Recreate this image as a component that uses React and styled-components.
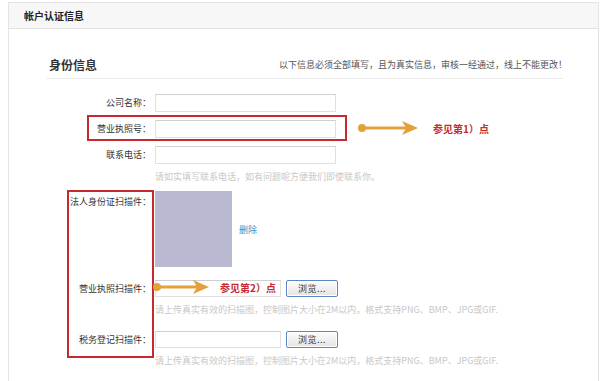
import React from "react";
import styled, { createGlobalStyle } from "styled-components";

const Global = createGlobalStyle`
  html, body { margin: 0; padding: 0; background: #fff; }
  body { font-family: "Noto Sans CJK SC", "Liberation Sans", sans-serif; color: #333; }
  #root { width: 600px; height: 381px; overflow: hidden; }
`;

const Page = styled.div`
  position: relative;
  width: 600px;
  height: 381px;
  padding: 2px 0 0 8px;
  box-sizing: border-box;
  overflow: hidden;
`;

const Panel = styled.div`
  width: 591px;
  height: 420px;
  border: 1px solid #e4e4e4;
  box-sizing: border-box;
  background: #fff;
`;

const Header = styled.div`
  height: 25px;
  line-height: 25px;
  background: #f7f7f7;
  border-bottom: 1px solid #e2e2e2;
  padding-left: 15px;
  font-size: 10px;
  font-weight: bold;
  color: #222;
`;

const Body = styled.div`
  padding: 28px 35px 0 37px;
`;

const SectionHead = styled.div`
  display: flex;
  justify-content: space-between;
  align-items: flex-start;
  height: 21px;
  border-bottom: 1px solid #ececec;
  padding-left: 3px;
`;

const SectionTitle = styled.div`
  font-size: 12px;
  line-height: 16px;
  font-weight: bold;
  color: #333;
`;

const Notice = styled.div`
  font-size: 9px;
  line-height: 16px;
  color: #555;
  margin-right: -4px;
`;

const Form = styled.div`
  padding-top: 15px;
  display: flex;
  flex-direction: column;
`;

const Row = styled.div`
  display: flex;
  align-items: ${(p) => (p.$top ? "flex-start" : "center")};
  gap: 4px;
  margin-top: ${(p) => p.$mt || 0}px;
`;

const Label = styled.div`
  width: 105px;
  flex: none;
  text-align: right;
  font-size: 9px;
  line-height: 12px;
  color: #333;
  padding-top: ${(p) => (p.$top ? 5 : 0)}px;
`;

const TextInput = styled.div`
  width: ${(p) => p.$w || 181}px;
  height: ${(p) => p.$h || 18}px;
  box-sizing: border-box;
  border: 1px solid #e0e0e0;
  border-top-color: #cfcfcf;
  background: #fff;
`;

const Hint = styled.div`
  margin: 7px 0 0 109px;
  font-size: 9px;
  line-height: 12px;
  color: #c8c8c8;
  white-space: nowrap;
`;

const ScanBox = styled.div`
  width: 77px;
  height: 76px;
  background: #b9b9d1;
`;

const DeleteLink = styled.a`
  align-self: center;
  margin-left: 3px;
  font-size: 9px;
  color: #3d8fc4;
  text-decoration: none;
`;

const BrowseButton = styled.button`
  margin-left: 1px;
  width: 52px;
  height: 17px;
  padding: 0;
  box-sizing: border-box;
  border: 1px solid #5d86c5;
  border-radius: 2px;
  background: linear-gradient(#fdfdfd, #e4e4e4);
  box-shadow: inset 0 0 0 1px #fff;
  font-family: inherit;
  font-size: 9px;
  line-height: 14px;
  letter-spacing: 0.5px;
  color: #333;
`;

const RedBox = styled.div`
  position: absolute;
  left: ${(p) => p.$x}px;
  top: ${(p) => p.$y}px;
  width: ${(p) => p.$w}px;
  height: ${(p) => p.$h}px;
  border: 2px solid #c52a2e;
  box-sizing: border-box;
  pointer-events: none;
`;

const Callout = styled.div`
  position: absolute;
  left: ${(p) => p.$x}px;
  top: ${(p) => p.$y}px;
  display: flex;
  align-items: center;
  gap: ${(p) => p.$gap}px;
  height: 14px;
`;

const CalloutText = styled.span`
  font-size: 10px;
  font-weight: bold;
  color: #c52a2e;
  white-space: nowrap;
`;

const Arrow = ({ width }) => (
  <svg width={width} height="14" viewBox={`0 0 ${width} 14`}>
    <circle cx="4" cy="7" r="4" fill="#e2a23a" />
    <rect x="4" y="5.5" width={width - 16} height="3" fill="#e2a23a" />
    <polygon
      points={`${width - 16},0 ${width},7 ${width - 16},14 ${width - 12},7`}
      fill="#e2a23a"
    />
  </svg>
);

export default function App() {
  return (
    <>
      <Global />
      <Page>
        <Panel>
          <Header>帐户认证信息</Header>
          <Body>
            <SectionHead>
              <SectionTitle>身份信息</SectionTitle>
              <Notice>以下信息必须全部填写，且为真实信息，审核一经通过，线上不能更改！</Notice>
            </SectionHead>
            <Form>
              <Row>
                <Label>公司名称：</Label>
                <TextInput />
              </Row>
              <Row $mt={8}>
                <Label>营业执照号：</Label>
                <TextInput />
              </Row>
              <Row $mt={8}>
                <Label>联系电话：</Label>
                <TextInput />
              </Row>
              <Hint>请如实填写联系电话，如有问题呢方便我们即使联系你。</Hint>
              <Row $mt={8} $top>
                <Label $top>法人身份证扫描件：</Label>
                <ScanBox />
                <DeleteLink>删除</DeleteLink>
              </Row>
              <Row $mt={13}>
                <Label>营业执照扫描件：</Label>
                <TextInput $w={126} $h={17} />
                <BrowseButton>浏览...</BrowseButton>
              </Row>
              <Hint>请上传真实有效的扫描图，控制图片大小在2M以内，格式支持PNG、BMP、JPG或GIF.</Hint>
              <Row $mt={15}>
                <Label>税务登记扫描件：</Label>
                <TextInput $w={126} $h={17} />
                <BrowseButton>浏览...</BrowseButton>
              </Row>
              <Hint>请上传真实有效的扫描图，控制图片大小在2M以内，格式支持PNG、BMP、JPG或GIF.</Hint>
            </Form>
          </Body>
        </Panel>

        <RedBox $x={87} $y={115} $w={260} $h={26} />
        <RedBox $x={67} $y={190} $w={87} $h={168} />
        <Callout $x={358} $y={121} $gap={15}>
          <Arrow width={60} />
          <CalloutText>参见第1）点</CalloutText>
        </Callout>
        <Callout $x={153} $y={280} $gap={11}>
          <Arrow width={56} />
          <CalloutText>参见第2）点</CalloutText>
        </Callout>
      </Page>
    </>
  );
}
